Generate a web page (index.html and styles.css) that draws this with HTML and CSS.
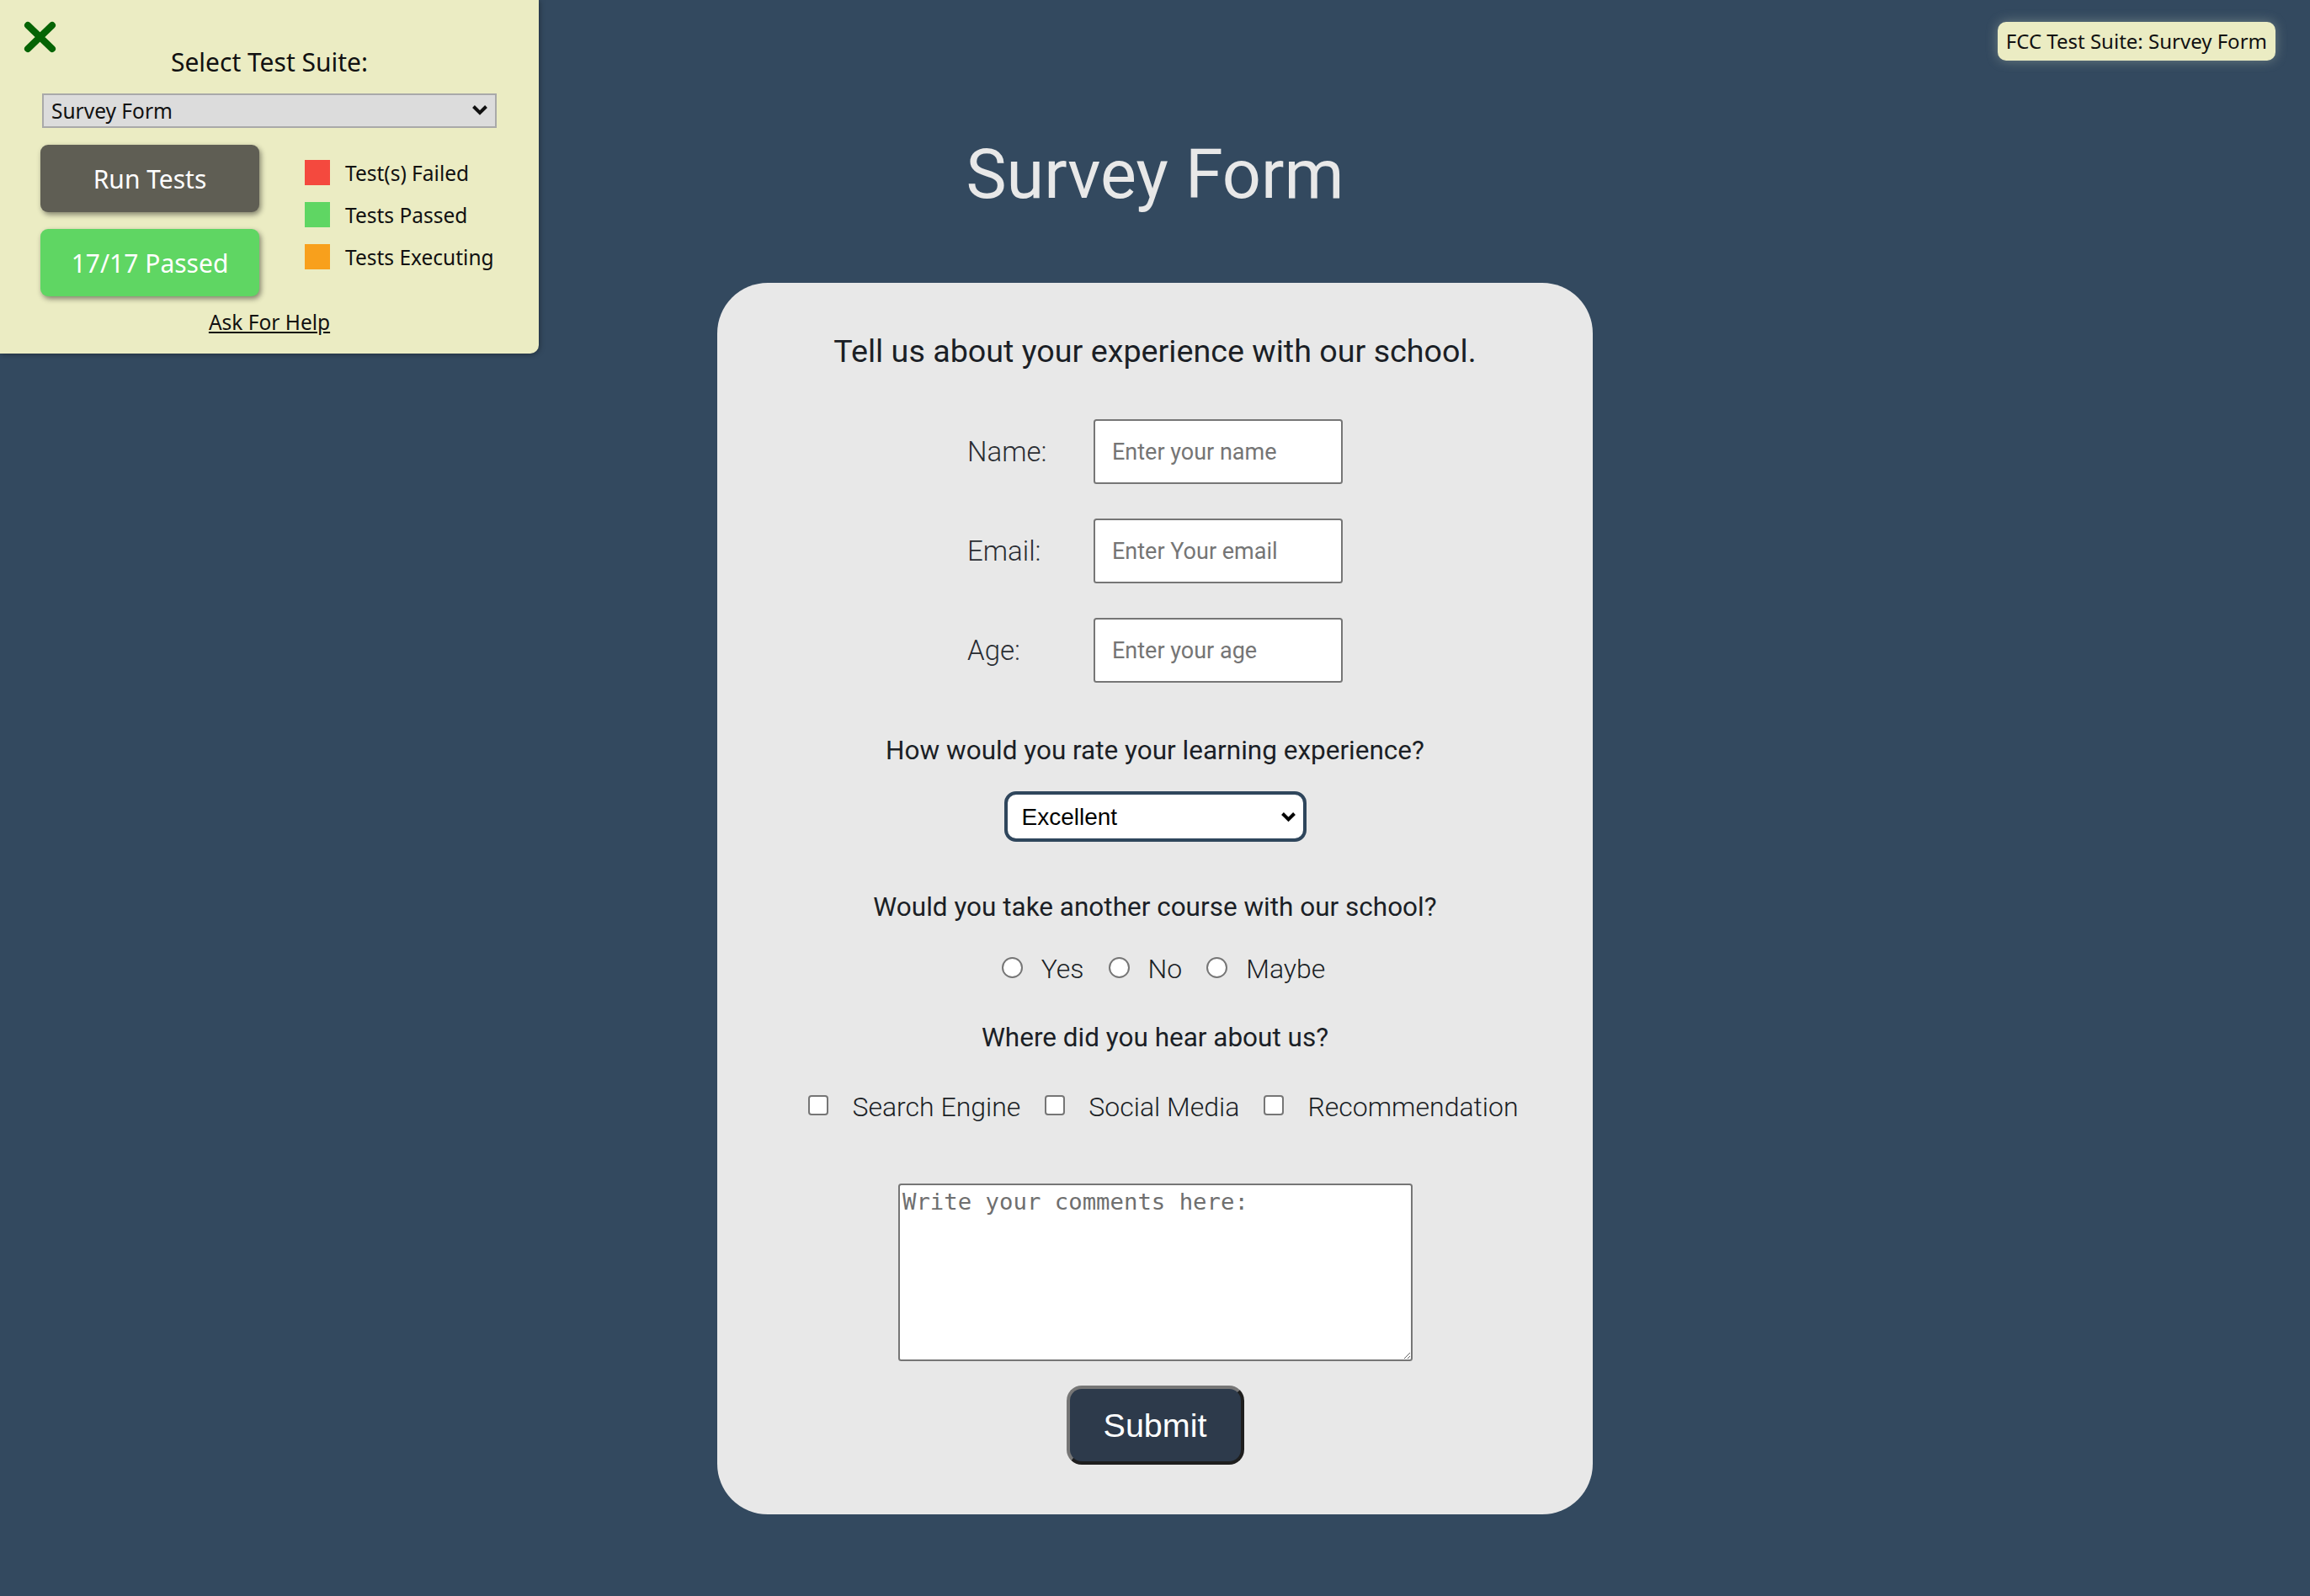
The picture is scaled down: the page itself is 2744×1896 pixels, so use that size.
FILE: index.html
```html
<!DOCTYPE html>
<html lang="en">
<head>
<meta charset="utf-8">
<title>Survey Form</title>
<link rel="stylesheet" href="styles.css">
</head>
<body>
<div class="fcc-panel">
  <div class="fcc-close">
    <svg width="39" height="38" viewBox="0 0 39 38"><path d="M5 5 L34 33 M34 5 L5 33" stroke="#056405" stroke-width="8" stroke-linecap="round" fill="none"/></svg>
  </div>
  <div class="fcc-title">Select Test Suite:</div>
  <div class="fcc-select-wrap">
    <select class="fcc-select"><option>Survey Form</option></select>
    <svg class="fcc-chev" width="20" height="13" viewBox="0 0 20 13"><path d="M2.5 2.5 L10 10 L17.5 2.5" stroke="#111" stroke-width="4" fill="none"/></svg>
  </div>
  <div class="fcc-body">
    <div class="fcc-buttons">
      <button class="fcc-btn fcc-run">Run Tests</button>
      <button class="fcc-btn fcc-passed">17/17 Passed</button>
    </div>
    <ul class="fcc-legend">
      <li><span class="sq sq-red"></span>Test(s) Failed</li>
      <li><span class="sq sq-green"></span>Tests Passed</li>
      <li><span class="sq sq-orange"></span>Tests Executing</li>
    </ul>
  </div>
  <a class="fcc-help" href="#">Ask For Help</a>
</div>
<div class="fcc-badge">FCC Test Suite: Survey Form</div>

<main class="page">
  <h1 class="title">Survey Form</h1>
  <form class="card">
    <h2 class="intro">Tell us about your experience with our school.</h2>
    <div class="fields">
      <label class="field-label" for="name">Name:</label>
      <input class="field-input" id="name" type="text" placeholder="Enter your name">
      <label class="field-label" for="email">Email:</label>
      <input class="field-input" id="email" type="email" placeholder="Enter Your email">
      <label class="field-label" for="age">Age:</label>
      <input class="field-input" id="age" type="number" placeholder="Enter your age">
    </div>
    <p class="question q1">How would you rate your learning experience?</p>
    <div class="rating-wrap">
      <select class="rating"><option>Excellent</option><option>Good</option><option>Average</option><option>Poor</option></select>
      <svg class="rating-chev" width="19" height="13" viewBox="0 0 19 13"><path d="M2.5 2.5 L9.5 9.5 L16.5 2.5" stroke="#000" stroke-width="4" fill="none"/></svg>
    </div>
    <p class="question q2">Would you take another course with our school?</p>
    <div class="choice-row radios">
      <input class="radio" type="radio" name="again" id="r-yes"><label class="choice-label" for="r-yes">Yes</label>
      <input class="radio" type="radio" name="again" id="r-no"><label class="choice-label" for="r-no">No</label>
      <input class="radio" type="radio" name="again" id="r-maybe"><label class="choice-label" for="r-maybe">Maybe</label>
    </div>
    <p class="question q3">Where did you hear about us?</p>
    <div class="choice-row checks">
      <input class="check" type="checkbox" id="c-search"><label class="choice-label" for="c-search">Search Engine</label>
      <input class="check" type="checkbox" id="c-social"><label class="choice-label" for="c-social">Social Media</label>
      <input class="check" type="checkbox" id="c-rec"><label class="choice-label" for="c-rec">Recommendation</label>
    </div>
    <textarea class="comments" placeholder="Write your comments here:"></textarea>
    <button class="submit" type="submit">Submit</button>
  </form>
</main>
</body>
</html>
```

FILE: styles.css
```css
* { box-sizing: border-box; }

html, body {
  margin: 0;
  padding: 0;
}

body {
  background: #33495f;
  font-family: Roboto, "Liberation Sans", sans-serif;
  min-height: 1896px;
}

/* ---------- FCC test panel ---------- */
.fcc-panel {
  position: absolute;
  top: 0;
  left: 0;
  width: 640px;
  height: 420px;
  background: #ebecc3;
  border-bottom-right-radius: 10px;
  box-shadow: 1px 1px 6px rgba(0, 0, 0, 0.35);
  font-family: "Noto Sans", "Open Sans", sans-serif;
  color: #111;
  padding-top: 54px;
}

.fcc-close {
  position: absolute;
  left: 28px;
  top: 25px;
  width: 39px;
  height: 38px;
}
.fcc-close svg { display: block; }

.fcc-title {
  font-size: 30px;
  line-height: 40px;
  height: 40px;
  text-align: center;
}

.fcc-select-wrap {
  position: relative;
  width: 540px;
  height: 41px;
  margin: 17px 0 0 50px;
}

.fcc-select {
  appearance: none;
  -webkit-appearance: none;
  width: 100%;
  height: 100%;
  background: #dcdcdc;
  border: 2px solid #a9a9a9;
  border-radius: 0;
  font-family: "Noto Sans", sans-serif;
  font-size: 24.5px;
  color: #111;
  padding: 0 0 0 9px;
}

.fcc-chev {
  position: absolute;
  right: 10px;
  top: 13px;
  pointer-events: none;
}

.fcc-body {
  display: flex;
  margin-top: 20px;
  padding-left: 48px;
}

.fcc-buttons {
  display: flex;
  flex-direction: column;
  gap: 20px;
  width: 260px;
}

.fcc-btn {
  width: 260px;
  height: 80px;
  border: none;
  border-radius: 9px;
  color: #fff;
  font-family: "Noto Sans", sans-serif;
  font-size: 30px;
  box-shadow: 2px 3px 6px rgba(0, 0, 0, 0.45);
  padding: 0;
}

.fcc-run { background: #5f5e54; }
.fcc-passed { background: #5fd663; }

.fcc-legend {
  list-style: none;
  margin: 18px 0 0 54px;
  padding: 0;
  display: flex;
  flex-direction: column;
  gap: 20px;
}

.fcc-legend li {
  display: flex;
  align-items: center;
  height: 30px;
  font-size: 24.5px;
  color: #111;
  white-space: nowrap;
}

.sq {
  display: inline-block;
  width: 30px;
  height: 30px;
  margin-right: 18px;
}
.sq-red { background: #f4493e; }
.sq-green { background: #5fd663; }
.sq-orange { background: #f8a01c; }

.fcc-help {
  display: block;
  width: max-content;
  margin: 14px auto 0;
  font-size: 24.5px;
  line-height: 33px;
  color: #111;
  text-decoration: underline;
}

.fcc-badge {
  position: absolute;
  top: 26px;
  right: 41px;
  height: 46px;
  line-height: 46px;
  padding: 0 10px;
  background: #ebecc3;
  border-radius: 10px;
  font-family: "Noto Sans", sans-serif;
  font-size: 24px;
  color: #111;
  box-shadow: 0 0 14px rgba(220, 225, 200, 0.35);
}

/* ---------- Survey page ---------- */
.page {
  padding-top: 158px;
  padding-bottom: 40px;
}

.title {
  margin: 0;
  font-family: Roboto, sans-serif;
  font-weight: 400;
  font-size: 81px;
  line-height: 100px;
  color: #e8e8e8;
  text-align: center;
}

.card {
  width: 1040px;
  margin: 78px auto 0;
  background: #e8e8e8;
  border-radius: 60px;
  padding: 58px 0 59px;
  color: #222;
}

.intro {
  margin: 0;
  font-family: Roboto, sans-serif;
  font-weight: 400;
  font-size: 37.7px;
  line-height: 46px;
  text-align: center;
  color: #1b1f26;
}

.fields {
  margin-top: 58px;
  display: grid;
  grid-template-columns: 150px 296px;
  justify-content: center;
  row-gap: 41px;
}

.field-label {
  align-self: center;
  font-family: Roboto, sans-serif;
  font-weight: 300;
  font-size: 33px;
  color: #2a2d33;
}

.field-input {
  width: 296px;
  height: 77px;
  border: 2px solid #767676;
  border-radius: 3.5px;
  background: #fff;
  padding: 0 20px;
  font-family: Roboto, "Liberation Sans", sans-serif;
  font-size: 27px;
  color: #222;
}
.field-input::placeholder { color: #757575; }
.field-input::-webkit-outer-spin-button,
.field-input::-webkit-inner-spin-button { -webkit-appearance: none; margin: 0; }

.question {
  margin: 0;
  font-family: Roboto, sans-serif;
  font-weight: 400;
  font-size: 31.5px;
  line-height: 37px;
  text-align: center;
  color: #1b1f26;
}
.q1 { margin-top: 62px; }
.q2 { margin-top: 59px; }
.q3 { margin-top: 43px; }

.rating-wrap {
  position: relative;
  width: 359px;
  height: 60px;
  margin: 30px auto 0;
}

.rating {
  appearance: none;
  -webkit-appearance: none;
  width: 100%;
  height: 100%;
  background: #fff;
  border: 4px solid #2f465c;
  border-radius: 14px;
  padding: 0 0 0 17px;
  font-family: "Liberation Sans", Arial, sans-serif;
  font-size: 28px;
  color: #000;
}

.rating-chev {
  position: absolute;
  right: 12px;
  top: 24px;
  pointer-events: none;
}

.choice-row {
  display: flex;
  justify-content: center;
  align-items: center;
  height: 40px;
  padding-left: 20px;
  font-family: Roboto, sans-serif;
  font-weight: 300;
  font-size: 32px;
  color: #1b1f26;
}
.radios { margin-top: 35px; }
.checks { margin-top: 44px; }

.radio {
  appearance: none;
  -webkit-appearance: none;
  width: 25px;
  height: 25px;
  margin: 0 22px 4px 0;
  flex: none;
  border: 2px solid #767676;
  border-radius: 50%;
  background: #fff;
}
.radio ~ .radio { margin-left: 29px; }

.check {
  appearance: none;
  -webkit-appearance: none;
  width: 24px;
  height: 24px;
  margin: 0 28px 4px 0;
  flex: none;
  border: 2px solid #767676;
  border-radius: 4px;
  background: #fff;
}
.check ~ .check { margin-left: 29px; }

.choice-label { white-space: nowrap; }

.comments {
  display: block;
  width: 611px;
  height: 211px;
  margin: 71px auto 0;
  border: 2px solid #767676;
  border-radius: 3.5px;
  padding: 3.5px;
  background: #fff;
  font-family: "DejaVu Sans Mono", "Liberation Mono", monospace;
  font-size: 27.3px;
  color: #222;
}
.comments::placeholder { color: #6f6f6f; }

.submit {
  display: block;
  width: 211px;
  height: 94px;
  margin: 29px auto 0;
  background: #2d3a4b;
  border: 4px solid;
  border-color: #767676 #1e1e1e #1e1e1e #767676;
  border-radius: 18px;
  color: #fff;
  font-family: "Liberation Sans", Arial, sans-serif;
  font-size: 39.5px;
  padding: 0;
}
```
